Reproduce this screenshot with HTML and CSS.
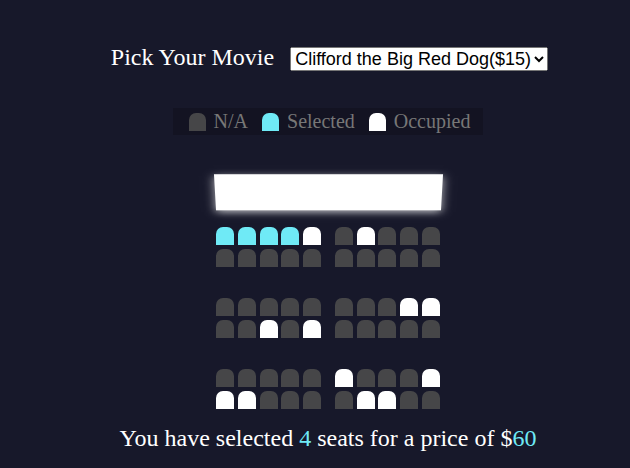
FILE: index.html
```html
<!DOCTYPE html>
<html lang="en">
<head>
<meta charset="utf-8">
<title>Movie Seat Booking</title>
<link rel="stylesheet" href="styles.css">
</head>
<body>
  <div class="movie-row">
    <label class="movie-label" for="movie">Pick Your Movie</label>
    <select id="movie" class="movie-select">
      <option>Clifford the Big Red Dog($15)</option>
      <option>Encanto($12)</option>
      <option>Spider-Man($10)</option>
    </select>
  </div>

  <ul class="showcase">
    <li class="showcase-item"><span class="seat seat-legend"></span><small>N/A</small></li>
    <li class="showcase-item"><span class="seat seat-legend selected"></span><small>Selected</small></li>
    <li class="showcase-item"><span class="seat seat-legend occupied"></span><small>Occupied</small></li>
  </ul>

  <div class="theater">
    <div class="screen"></div>
    <div class="rows">
      <div class="row"><span class="seat selected"></span><span class="seat selected"></span><span class="seat selected"></span><span class="seat selected"></span><span class="seat occupied"></span><span class="seat"></span><span class="seat occupied"></span><span class="seat"></span><span class="seat"></span><span class="seat"></span></div>
      <div class="row"><span class="seat"></span><span class="seat"></span><span class="seat"></span><span class="seat"></span><span class="seat"></span><span class="seat"></span><span class="seat"></span><span class="seat"></span><span class="seat"></span><span class="seat"></span></div>
      <div class="row"><span class="seat"></span><span class="seat"></span><span class="seat"></span><span class="seat"></span><span class="seat"></span><span class="seat"></span><span class="seat"></span><span class="seat"></span><span class="seat occupied"></span><span class="seat occupied"></span></div>
      <div class="row"><span class="seat"></span><span class="seat"></span><span class="seat occupied"></span><span class="seat"></span><span class="seat occupied"></span><span class="seat"></span><span class="seat"></span><span class="seat"></span><span class="seat"></span><span class="seat"></span></div>
      <div class="row"><span class="seat"></span><span class="seat"></span><span class="seat"></span><span class="seat"></span><span class="seat"></span><span class="seat occupied"></span><span class="seat"></span><span class="seat"></span><span class="seat"></span><span class="seat occupied"></span></div>
      <div class="row"><span class="seat occupied"></span><span class="seat occupied"></span><span class="seat"></span><span class="seat"></span><span class="seat"></span><span class="seat"></span><span class="seat occupied"></span><span class="seat occupied"></span><span class="seat"></span><span class="seat"></span></div>
    </div>
  </div>

  <p class="text">You have selected <span class="hl">4</span> seats for a price of $<span class="hl">60</span></p>
</body>
</html>
```

FILE: styles.css
```css
* {
  box-sizing: border-box;
}

html, body {
  height: 100%;
}

body {
  margin: 0;
  padding: 44px 0 0 26px;
  background-color: #17182a;
  color: #fff;
  font-family: "Liberation Serif", "Times New Roman", serif;
  display: flex;
  flex-direction: column;
  align-items: center;
  overflow: hidden;
}

.movie-row {
  display: flex;
  align-items: baseline;
  gap: 16px;
  margin-left: 3px;
  font-size: 24px;
}

.movie-select {
  font-family: "Liberation Sans", Arial, sans-serif;
  font-size: 18px;
}

.showcase {
  list-style: none;
  margin: 37px 0 0;
  padding: 2px 13px 2px 16px;
  display: flex;
  align-items: center;
  gap: 14px;
  background: rgba(0, 0, 0, 0.17);
  color: #777;
}

.showcase-item {
  display: flex;
  align-items: center;
}

.showcase-item small {
  font-size: 20px;
  line-height: 23px;
}

.seat {
  display: block;
  width: 18px;
  height: 18px;
  margin: 1.835px;
  background-color: #464648;
  border-top-left-radius: 7px;
  border-top-right-radius: 7px;
}

.seat.selected {
  background-color: #6feaf6;
}

.seat.occupied {
  background-color: #fff;
}

.seat-legend {
  width: 17px;
  height: 18px;
  margin: 0 8px 0 0;
}

.theater {
  margin-top: 31.5px;
  display: flex;
  flex-direction: column;
  align-items: center;
}

.screen {
  width: 227px;
  height: 51px;
  background-color: #fff;
  transform: perspective(2000px) rotateX(-45deg);
  box-shadow: 0 3px 10px rgba(255, 255, 255, 0.7);
  margin-bottom: 8px;
}

.rows {
  display: flex;
  flex-direction: column;
}

.row {
  display: flex;
}

.row .seat:nth-child(5) {
  margin-right: 12.43px;
}

.row:nth-child(2n):not(:last-child) {
  margin-bottom: 27.5px;
}

.text {
  margin: 15px 0 0;
  font-size: 24px;
}

.hl {
  color: #6feaf6;
}
```
